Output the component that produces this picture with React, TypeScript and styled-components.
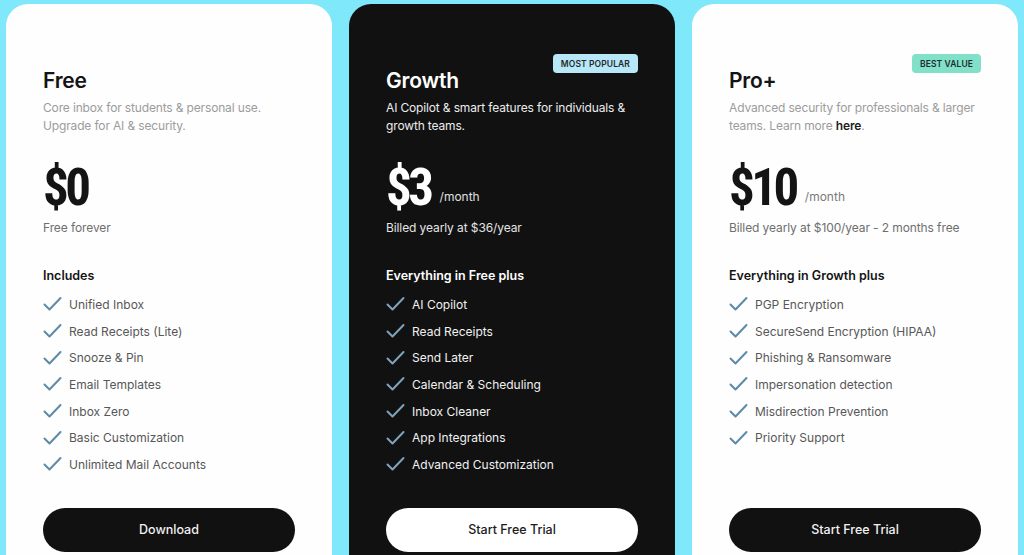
import React from "react";
import styled, { createGlobalStyle, css } from "styled-components";

const Global = createGlobalStyle`
  html, body { margin: 0; padding: 0; }
  body {
    background: #7fe8fa;
    font-family: Inter, "Noto Sans", sans-serif;
    overflow: hidden;
  }
`;

const Page = styled.div`
  height: 555px;
  overflow: hidden;
  padding: 4px 6px 0;
  box-sizing: border-box;
  display: grid;
  grid-template-columns: repeat(3, 326px);
  column-gap: 17px;
`;

const Card = styled.div<{ $dark?: boolean }>`
  position: relative;
  height: 600px;
  border-radius: 22px;
  padding: 63px 37px 0;
  box-sizing: border-box;
  display: flex;
  flex-direction: column;
  background: ${(p) => (p.$dark ? "#111111" : "#fefefe")};
  color: ${(p) => (p.$dark ? "#ffffff" : "#141414")};
`;

const Badge = styled.span<{ $bg: string }>`
  position: absolute;
  top: 50px;
  right: 37px;
  height: 19px;
  padding: 0 8px;
  border-radius: 4px;
  background: ${(p) => p.$bg};
  color: #1f2a30;
  font-size: 8.5px;
  font-weight: 600;
  letter-spacing: 0.1px;
  display: flex;
  align-items: center;
`;

const Title = styled.h2`
  margin: 0;
  font-size: 21px;
  line-height: 28px;
  font-weight: 600;
  letter-spacing: -0.2px;
`;

const Desc = styled.p<{ $dark?: boolean }>`
  margin: 4px 0 0;
  font-size: 12px;
  line-height: 18px;
  white-space: nowrap;
  letter-spacing: -0.15px;
  color: ${(p) => (p.$dark ? "#ececec" : "#9c9c9c")};
  b {
    font-weight: 600;
    color: #1e1e1e;
  }
`;

const PriceRow = styled.div`
  margin-top: 26px;
  display: flex;
  align-items: baseline;
  gap: 5px;
  height: 54px;
`;

const Amount = styled.span`
  font-family: Roboto, "Liberation Sans", sans-serif;
  font-weight: 700;
  font-size: 51px;
  line-height: 54px;
  letter-spacing: -3.5px;
  font-stretch: 85%;
`;

const Per = styled.span<{ $dark?: boolean }>`
  font-size: 12px;
  position: relative;
  top: -4px;
  margin-left: 4px;
  color: ${(p) => (p.$dark ? "#e0e0e0" : "#7a7a7a")};
`;

const Billing = styled.div<{ $dark?: boolean }>`
  margin-top: 4px;
  font-size: 12px;
  line-height: 18px;
  letter-spacing: -0.1px;
  color: ${(p) => (p.$dark ? "#e4e4e4" : "#6f6f6f")};
`;

const ListHead = styled.div`
  margin-top: 30px;
  font-size: 12.5px;
  line-height: 18px;
  font-weight: 600;
`;

const List = styled.ul`
  margin: 6px 0 0;
  padding: 0;
  list-style: none;
`;

const Item = styled.li<{ $dark?: boolean }>`
  height: 26.7px;
  display: flex;
  align-items: center;
  gap: 7px;
  font-size: 12px;
  color: ${(p) => (p.$dark ? "#f2f2f2" : "#575757")};
`;

const Button = styled.button<{ $light?: boolean }>`
  margin-top: 30px;
  height: 44px;
  width: 100%;
  border: none;
  border-radius: 22px;
  font-family: inherit;
  font-size: 12.5px;
  font-weight: 500;
  cursor: pointer;
  ${(p) =>
    p.$light
      ? css`
          background: #ffffff;
          color: #1c1c1c;
        `
      : css`
          background: #111111;
          color: #f0f0f0;
        `}
`;

const Check = ({ color }: { color: string }) => (
  <svg width="19" height="16" viewBox="0 0 19 16" fill="none">
    <path
      d="M1.5 8.5 L6.5 13.5 L17.5 2"
      stroke={color}
      strokeWidth="2"
      strokeLinecap="round"
      strokeLinejoin="round"
    />
  </svg>
);

type Plan = {
  name: string;
  desc: React.ReactNode;
  price: string;
  per?: string;
  billing: string;
  head: string;
  items: string[];
  cta: string;
  dark?: boolean;
  badge?: { text: string; bg: string };
};

const plans: Plan[] = [
  {
    name: "Free",
    desc: (
      <>
        Core inbox for students &amp; personal use.
        <br />
        Upgrade for AI &amp; security.
      </>
    ),
    price: "$0",
    billing: "Free forever",
    head: "Includes",
    items: [
      "Unified Inbox",
      "Read Receipts (Lite)",
      "Snooze & Pin",
      "Email Templates",
      "Inbox Zero",
      "Basic Customization",
      "Unlimited Mail Accounts",
    ],
    cta: "Download",
  },
  {
    name: "Growth",
    desc: (
      <>
        AI Copilot &amp; smart features for individuals &amp;
        <br />
        growth teams.
      </>
    ),
    price: "$3",
    per: "/month",
    billing: "Billed yearly at $36/year",
    head: "Everything in Free plus",
    items: [
      "AI Copilot",
      "Read Receipts",
      "Send Later",
      "Calendar & Scheduling",
      "Inbox Cleaner",
      "App Integrations",
      "Advanced Customization",
    ],
    cta: "Start Free Trial",
    dark: true,
    badge: { text: "MOST POPULAR", bg: "#b8e8f7" },
  },
  {
    name: "Pro+",
    desc: (
      <>
        Advanced security for professionals &amp; larger
        <br />
        teams. Learn more <b>here</b>.
      </>
    ),
    price: "$10",
    per: "/month",
    billing: "Billed yearly at $100/year - 2 months free",
    head: "Everything in Growth plus",
    items: [
      "PGP Encryption",
      "SecureSend Encryption (HIPAA)",
      "Phishing & Ransomware",
      "Impersonation detection",
      "Misdirection Prevention",
      "Priority Support",
    ],
    cta: "Start Free Trial",
    badge: { text: "BEST VALUE", bg: "#80e0c8" },
  },
];

export default function App() {
  return (
    <>
      <Global />
      <Page>
        {plans.map((p) => (
          <Card key={p.name} $dark={p.dark}>
            {p.badge && <Badge $bg={p.badge.bg}>{p.badge.text}</Badge>}
            <Title>{p.name}</Title>
            <Desc $dark={p.dark}>{p.desc}</Desc>
            <PriceRow>
              <Amount>{p.price}</Amount>
              {p.per && <Per $dark={p.dark}>{p.per}</Per>}
            </PriceRow>
            <Billing $dark={p.dark}>{p.billing}</Billing>
            <ListHead>{p.head}</ListHead>
            <List>
              {p.items.map((it) => (
                <Item key={it} $dark={p.dark}>
                  <Check color={p.dark ? "#7fa3bb" : "#5d8aa6"} />
                  {it}
                </Item>
              ))}
              {p.items.length < 7 && <Item aria-hidden />}
            </List>
            <Button $light={p.dark}>{p.cta}</Button>
          </Card>
        ))}
      </Page>
    </>
  );
}
